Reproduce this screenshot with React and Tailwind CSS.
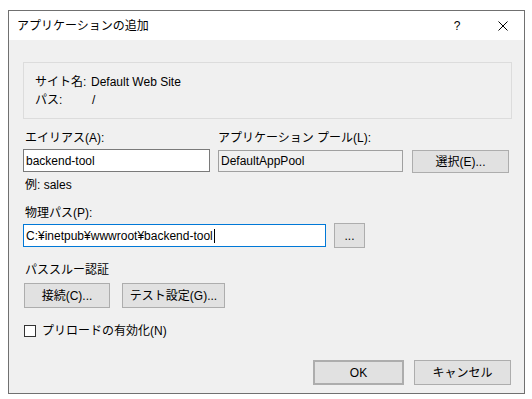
const font = { fontFamily: '"Liberation Sans", "Noto Sans CJK JP", sans-serif' }

const Btn = ({ className = "", children }) => (
  <div
    className={`flex items-center justify-center bg-[#e1e1e1] border border-[#adadad] text-[12px] text-black ${className}`}
  >
    {children}
  </div>
)

const App = () => {
  return (
    <div className="w-[532px] h-[399px] bg-white pt-[10px] pl-[8px]" style={font}>
      <div className="w-[517px] h-[384px] border border-[#707070] flex flex-col">
        {/* title bar */}
        <div className="h-[29px] bg-white flex items-center pl-[8px] text-[12px] text-black">
          <span className="flex-1">アプリケーションの追加</span>
          <span className="w-[14px] text-center mr-[34px]">?</span>
          <svg width="10" height="10" viewBox="0 0 10 10" className="mr-[16px]">
            <path d="M0.5 0.5L9.5 9.5M9.5 0.5L0.5 9.5" stroke="#000" strokeWidth="1" />
          </svg>
        </div>

        {/* body */}
        <div className="flex-1 bg-[#f0f0f0] pl-[14px] pr-[12px] text-[12px] leading-[16px] text-black">
          <div className="mt-[22px] h-[57px] border border-[#dcdcdc] pt-[10px] pl-[11px]">
            <div className="flex h-[18px] items-center">
              <span className="w-[56px]">サイト名:</span>
              <span>Default Web Site</span>
            </div>
            <div className="flex h-[18px] items-center">
              <span className="w-[57px]">パス:</span>
              <span>/</span>
            </div>
          </div>

          <div className="flex mt-[11px]">
            <div className="w-[187px]">
              <div className="pl-[2px]">エイリアス(A):</div>
              <div className="mt-[3px] h-[23px] bg-white border border-[#7a7a7a] flex items-center pl-[2px]">
                backend-tool
              </div>
            </div>
            <div className="w-[185px] ml-[8px]">
              <div>アプリケーション プール(L):</div>
              <div className="mt-[4px] h-[22px] bg-[#f0f0f0] border border-[#a0a0a0] flex items-center pl-[2px]">
                DefaultAppPool
              </div>
            </div>
            <div className="ml-[9px] pt-[20px]">
              <Btn className="w-[97px] h-[23px]">選択(E)...</Btn>
            </div>
          </div>

          <div className="mt-[4px] pl-[2px]">例: sales</div>

          <div className="mt-[12px] pl-[2px]">物理パス(P):</div>
          <div className="flex items-center mt-[2px]">
            <div className="w-[303px] h-[23px] bg-white border border-[#0078d7] flex items-center pl-[2px]">
              C:¥inetpub¥wwwroot¥backend-tool
              <span className="inline-block w-[1px] h-[14px] bg-black ml-[1px]" />
            </div>
            <Btn className="w-[31px] h-[25px] ml-[8px]">...</Btn>
          </div>

          <div className="mt-[14px] pl-[2px]">パススルー認証</div>
          <div className="flex mt-[5px] pl-[1px]">
            <Btn className="w-[86px] h-[25px]">接続(C)...</Btn>
            <Btn className="w-[103px] h-[25px] ml-[12px]">テスト設定(G)...</Btn>
          </div>

          <div className="flex items-center mt-[15px] pl-[1px]">
            <div className="w-[12px] h-[12px] bg-white border border-[#333]" />
            <span className="ml-[6px]">プリロードの有効化(N)</span>
          </div>

          <div className="flex justify-end mt-[21px] pr-[1px]">
            <Btn className="w-[91px] h-[25px] border-2 border-[#0078d7]">OK</Btn>
            <Btn className="w-[97px] h-[25px] ml-[10px]">キャンセル</Btn>
          </div>
        </div>
      </div>
    </div>
  )
}

export default App
